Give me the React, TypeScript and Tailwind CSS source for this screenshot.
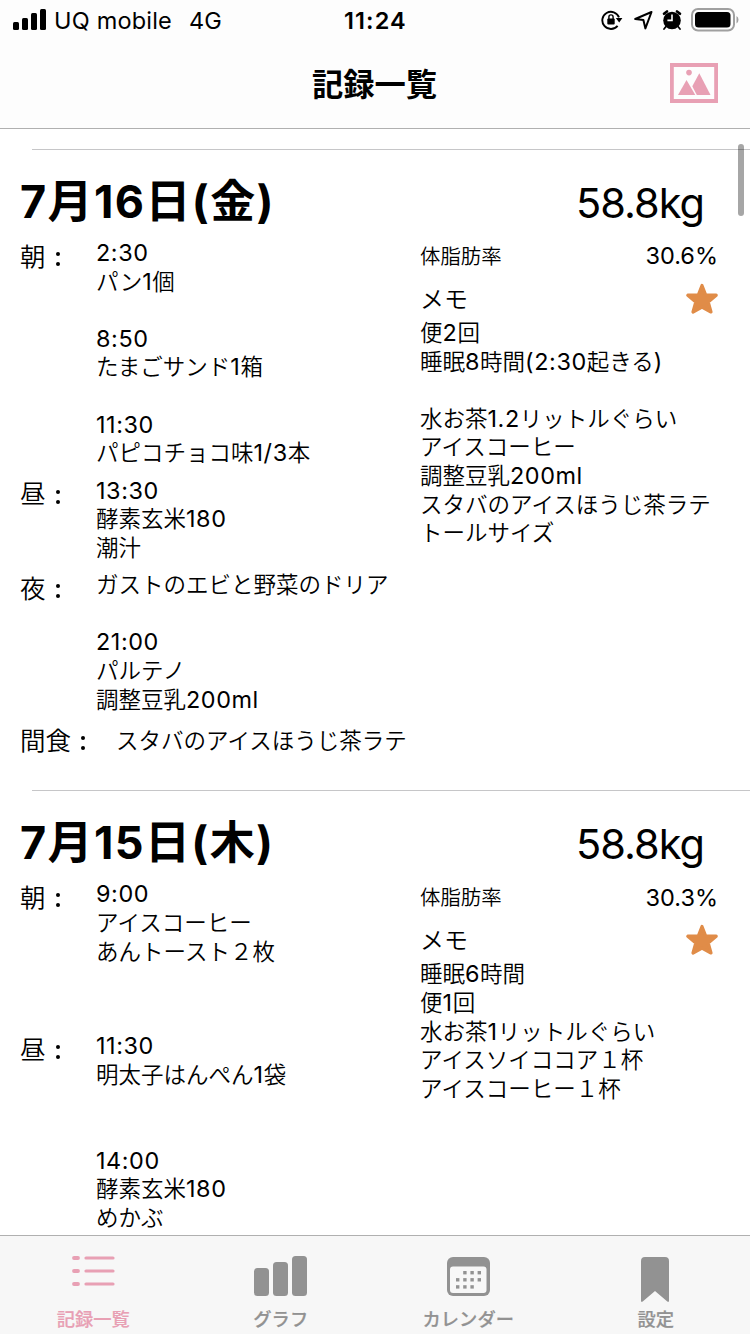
import { Fragment, ReactNode } from "react";

type Meal = {
  label: string;
  lines: string[];
};

type DayRecord = {
  date: string;
  weight: string;
  fat: string;
  meals: Meal[];
  snack?: string;
  memo: string[];
};

const records: DayRecord[] = [
  {
    date: "7月16日(金)",
    weight: "58.8kg",
    fat: "30.6%",
    meals: [
      {
        label: "朝",
        lines: [
          "2:30",
          "パン1個",
          "",
          "8:50",
          "たまごサンド1箱",
          "",
          "11:30",
          "パピコチョコ味1/3本",
        ],
      },
      { label: "昼", lines: ["13:30", "酵素玄米180", "潮汁"] },
      {
        label: "夜",
        lines: [
          "ガストのエビと野菜のドリア",
          "",
          "21:00",
          "パルテノ",
          "調整豆乳200ml",
        ],
      },
    ],
    snack: "スタバのアイスほうじ茶ラテ",
    memo: [
      "便2回",
      "睡眠8時間(2:30起きる)",
      "",
      "水お茶1.2リットルぐらい",
      "アイスコーヒー",
      "調整豆乳200ml",
      "スタバのアイスほうじ茶ラテ",
      "トールサイズ",
    ],
  },
  {
    date: "7月15日(木)",
    weight: "58.8kg",
    fat: "30.3%",
    meals: [
      {
        label: "朝",
        lines: ["9:00", "アイスコーヒー", "あんトースト２枚", "", ""],
      },
      {
        label: "昼",
        lines: [
          "11:30",
          "明太子はんぺん1袋",
          "",
          "",
          "14:00",
          "酵素玄米180",
          "めかぶ",
        ],
      },
    ],
    memo: [
      "睡眠6時間",
      "便1回",
      "水お茶1リットルぐらい",
      "アイスソイココア１杯",
      "アイスコーヒー１杯",
    ],
  },
];

// Latin runs are set slightly larger than the Japanese around them
function Mixed({ text }: { text: string }) {
  return (
    <>
      {text.split(/([\x21-\x7e]+)/).map((part, i) =>
        i % 2 === 1 ? (
          <span key={i} className="text-[1.04em] font-[380] leading-none tracking-[0.025em]">
            {part}
          </span>
        ) : (
          <Fragment key={i}>{part}</Fragment>
        )
      )}
    </>
  );
}

function Lines({ lines }: { lines: string[] }) {
  return (
    <div className="text-[22.5px] font-[350] leading-[28.6px] whitespace-nowrap">
      {lines.map((line, i) => (
        <div key={i} className="h-[28.6px]">
          <Mixed text={line} />
        </div>
      ))}
    </div>
  );
}

function Label({ children }: { children: ReactNode }) {
  return (
    <div className="flex h-[35px] items-center text-[25.5px] font-[350] leading-none">
      <span>{children}</span>
      <span className="ml-[10px] flex flex-col gap-[6px] pt-[5px]">
        <span className="size-[4px] rounded-full bg-black" />
        <span className="size-[4px] rounded-full bg-black" />
      </span>
    </div>
  );
}

function Star() {
  return (
    <svg className="-mr-px" width="34" height="32" viewBox="0 0 34 32" fill="#e08c48">
      <path
        d="M17 2.5 L20.6 11.8 L31.2 12.2 L23.2 18.9 L26 29 L17 24 L8 29 L10.8 18.9 L2.8 12.2 L13.4 11.8 Z"
        stroke="#e08c48"
        strokeWidth="3.2"
        strokeLinejoin="round"
      />
    </svg>
  );
}

function Day({ record }: { record: DayRecord }) {
  return (
    <section className="h-[641.4px] shrink-0">
      <div className="ml-[32px] h-px bg-[#c6c6c8]" />
      <div className="flex h-[89px] items-center justify-between pl-[20px] pr-[46px] pt-[16px]">
        <h2 className="pb-[2px] text-[45px] font-bold leading-none tracking-[1.4px] whitespace-nowrap">
          {record.date}
        </h2>
        <p className="pt-[2px] text-[41.5px] font-[380] leading-none tracking-[-1px]">
          {record.weight}
        </p>
      </div>
      <div className="flex">
        <div className="w-[420px] shrink-0 pl-[20px]">
          {record.meals.map((meal) => (
            <div key={meal.label} className="mb-[8.8px] flex">
              <div className="w-[76px] shrink-0">
                <Label>{meal.label}</Label>
              </div>
              <Lines lines={meal.lines} />
            </div>
          ))}
          {record.snack && (
            <div className="flex">
              <div className="w-[96px] shrink-0">
                <Label>間食</Label>
              </div>
              <div className="pt-[4px]">
                <Lines lines={[record.snack]} />
              </div>
            </div>
          )}
        </div>
        <div className="w-[298px] pt-[4px]">
          <div className="flex h-[28px] items-center justify-between">
            <span className="text-[20.4px] font-[350] leading-none">体脂肪率</span>
            <span className="pb-[2px] text-[23.5px] font-[380] leading-none">{record.fat}</span>
          </div>
          <div className="flex h-[48px] items-center justify-between pt-[8px]">
            <span className="pt-[2px] text-[24px] font-[350] leading-none">メモ</span>
            <Star />
          </div>
          <Lines lines={record.memo} />
        </div>
      </div>
    </section>
  );
}

function StatusBar() {
  return (
    <div className="grid h-[40px] grid-cols-[331px_1fr_300px] items-center pl-[13px] pr-[10px] text-[23.5px] leading-none">
      <div className="flex items-center">
        <svg width="34" height="22" viewBox="0 0 34 22">
          <rect x="0" y="13" width="6" height="8" rx="1.5" />
          <rect x="9" y="9" width="6" height="12" rx="1.5" />
          <rect x="18" y="4" width="6" height="17" rx="1.5" />
          <rect x="27" y="0" width="6" height="21" rx="1.5" />
        </svg>
        <span className="ml-[7px] pt-px tracking-[0.2px]">UQ mobile</span>
        <span className="ml-[17px] pt-px">4G</span>
      </div>
      <span className="pt-px font-semibold tracking-[1.1px]">11:24</span>
      <div className="flex items-center justify-end">
        <svg width="22" height="22" viewBox="0 0 22 22">
          <path
            d="M16.6 16.8 A8.6 8.6 0 1 1 18 8.4"
            fill="none"
            stroke="#000"
            strokeWidth="1.9"
          />
          <path d="M14.8 9 H21.4 L18.2 13.6 Z" />
          <rect x="6.3" y="9.6" width="7.4" height="6" rx="1" />
          <path
            d="M7.9 10 V8 A2.1 2.1 0 0 1 12.1 8 V10"
            fill="none"
            stroke="#000"
            strokeWidth="1.4"
          />
        </svg>
        <svg className="ml-[10px]" width="22" height="22" viewBox="0 0 22 22">
          <path
            d="M2.2 10 L18.5 3 L12.4 19.4 L10.4 11 Z"
            fill="none"
            stroke="#000"
            strokeWidth="2"
            strokeLinejoin="round"
          />
        </svg>
        <svg className="ml-[7px]" width="20" height="22" viewBox="0 0 20 22">
          <circle cx="10" cy="11.5" r="8.8" />
          <path
            d="M2 4.8 L5 2.4 M18 4.8 L15 2.4"
            stroke="#000"
            strokeWidth="2.6"
            strokeLinecap="round"
          />
          <path
            d="M4 17.5 L2 20 M16 17.5 L18 20"
            stroke="#000"
            strokeWidth="1.8"
            strokeLinecap="round"
          />
          <path d="M10 5.6 V11.4 H5.4" fill="none" stroke="#fff" strokeWidth="1.6" />
        </svg>
        <svg className="ml-[9px]" width="49" height="24" viewBox="0 0 49 24">
          <rect
            x="1"
            y="1"
            width="42"
            height="21.5"
            rx="6"
            fill="none"
            stroke="#a0a0a0"
            strokeWidth="2"
          />
          <rect x="4" y="4" width="35.5" height="15.5" rx="3.5" />
          <path d="M45.5 8 A4.5 4.5 0 0 1 45.5 15.5 Z" fill="#a0a0a0" />
        </svg>
      </div>
    </div>
  );
}

function PhotoIcon() {
  return (
    <svg width="48" height="40" viewBox="0 0 48 40" fill="#e8a0b4">
      <path fillRule="evenodd" d="M0 0 H48 V40 H0 Z M3.8 4 V36 H44.2 V4 Z" />
      <circle cx="19" cy="9.6" r="2.8" />
      <path d="M8 32 L16.5 17 L25.3 32 Z" />
      <path d="M22.3 23.3 L29.3 10.2 L40.5 32 H26.8 Z" />
    </svg>
  );
}

function ListIcon() {
  return (
    <svg
      width="44"
      height="44"
      viewBox="0 0 44 44"
      stroke="#e8a0b4"
      strokeLinecap="round"
      fill="none"
    >
      <path d="M2 2 H6 M2 15 H6 M2 28 H6" strokeWidth="3.8" />
      <path d="M14 2 H41 M14 15 H41 M14 28 H41" strokeWidth="3.2" />
    </svg>
  );
}

function ChartIcon() {
  return (
    <svg width="54" height="44" viewBox="0 0 54 44" fill="#929292">
      <rect x="0" y="12" width="15" height="28" rx="3.5" />
      <rect x="19" y="6" width="15" height="34" rx="3.5" />
      <rect x="38" y="0" width="15" height="40" rx="3.5" />
    </svg>
  );
}

// column/row positions of the day dots in the calendar icon
const dots = [
  [1, 0], [2, 0], [3, 0],
  [0, 1], [1, 1], [2, 1], [3, 1],
  [0, 2], [1, 2], [2, 2],
];

function CalendarIcon() {
  return (
    <svg className="mt-px" width="43" height="44" viewBox="0 0 43 44">
      <rect width="43" height="39" rx="6" fill="#929292" />
      <rect x="3" y="9.5" width="36.5" height="26.5" rx="3" fill="#f7f7f7" />
      {dots.map(([x, y]) => (
        <rect
          key={`${x}-${y}`}
          x={9 + x * 7.2}
          y={14 + y * 7.1}
          width="3.4"
          height="3.4"
          fill="#929292"
        />
      ))}
    </svg>
  );
}

function BookmarkIcon() {
  return (
    <svg className="mt-px mr-[2px]" width="28" height="46" viewBox="0 0 28 46" fill="#929292">
      <path d="M0 4 Q0 0 4 0 H24 Q28 0 28 4 V43.5 Q28 46 26 44.3 L14 34 L2 44.3 Q0 46 0 43.5 Z" />
    </svg>
  );
}

function Tab({
  label,
  active,
  children,
}: {
  label: string;
  active?: boolean;
  children: ReactNode;
}) {
  return (
    <button
      className={`flex flex-1 flex-col items-center text-[18.3px] font-medium leading-none ${
        active ? "text-[#e8a0b4]" : "text-[#929292]"
      }`}
    >
      <div className="flex h-[54px] items-start">{children}</div>
      <span className="mr-px [-webkit-text-stroke:0.2px_currentColor]">{label}</span>
    </button>
  );
}

export default function App() {
  return (
    <div className="relative flex h-[1334px] w-[750px] flex-col overflow-hidden bg-white font-['Inter','Noto_Sans_CJK_JP',sans-serif] text-black">
      <header className="h-[129px] shrink-0 border-b border-[#b0b0b0] bg-[#fdfdfd]">
        <StatusBar />
        <div className="grid h-[86px] grid-cols-[1fr_auto_1fr] items-center pr-[32px]">
          <div className="w-[32px]" />
          <h1 className="pt-[6px] pl-[31px] text-[31.3px] font-bold leading-none">記録一覧</h1>
          <div className="flex justify-end">
            <PhotoIcon />
          </div>
        </div>
      </header>

      <main className="flex min-h-0 flex-1 flex-col overflow-hidden pt-[20px]">
        {records.map((record) => (
          <Day key={record.date} record={record} />
        ))}
      </main>

      <div className="absolute left-[738px] top-[144px] h-[72px] w-[6px] rounded-full bg-black/35" />

      <nav className="flex h-[99px] shrink-0 border-t border-[#b0b0b0] bg-[#f7f7f7] pt-[20px]">
        <Tab label="記録一覧" active>
          <ListIcon />
        </Tab>
        <Tab label="グラフ">
          <ChartIcon />
        </Tab>
        <Tab label="カレンダー">
          <CalendarIcon />
        </Tab>
        <Tab label="設定">
          <BookmarkIcon />
        </Tab>
      </nav>
    </div>
  );
}
